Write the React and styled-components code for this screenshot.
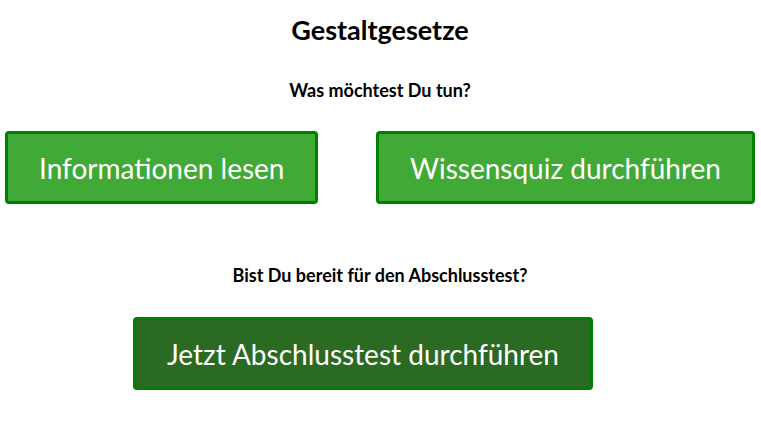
import styled, { createGlobalStyle } from "styled-components";

const GlobalStyle = createGlobalStyle`
  body {
    margin: 0;
    background: #ffffff;
    font-family: Lato, "Noto Sans", sans-serif;
    color: #000000;
  }
`;

const Page = styled.div`
  display: flex;
  flex-direction: column;
  width: 761px;
  height: 439px;
  box-sizing: border-box;
  padding: 13px 6px 0 5px;
`;

const Title = styled.h1`
  margin: 0;
  text-align: center;
  font-size: 27px;
  font-weight: 700;
  line-height: 34px;
`;

const Question = styled.p`
  margin: ${({ $top }) => $top} 0 0 0;
  text-align: center;
  font-size: 18px;
  font-weight: 700;
  line-height: 20px;
`;

const ChoiceRow = styled.div`
  display: flex;
  justify-content: space-between;
  margin-top: 31px;
`;

const FinalRow = styled.div`
  display: flex;
  justify-content: center;
  padding-right: 34px;
  margin-top: 32px;
`;

const Button = styled.button`
  height: 73px;
  box-sizing: border-box;
  padding: 0 31px;
  border: 3px solid #008000;
  border-radius: 4px;
  background: ${({ $dark }) => ($dark ? "#2b6a22" : "#41aa36")};
  color: #ffffff;
  font-family: Lato, "Noto Sans", sans-serif;
  font-size: 28px;
  font-weight: 400;
  cursor: pointer;
`;

export default function App() {
  return (
    <>
      <GlobalStyle />
      <Page>
        <Title>Gestaltgesetze</Title>
        <Question $top="33px">Was möchtest Du tun?</Question>
        <ChoiceRow>
          <Button>Informationen lesen</Button>
          <Button>Wissensquiz durchführen</Button>
        </ChoiceRow>
        <Question $top="61px">Bist Du bereit für den Abschlusstest?</Question>
        <FinalRow>
          <Button $dark>Jetzt Abschlusstest durchführen</Button>
        </FinalRow>
      </Page>
    </>
  );
}
